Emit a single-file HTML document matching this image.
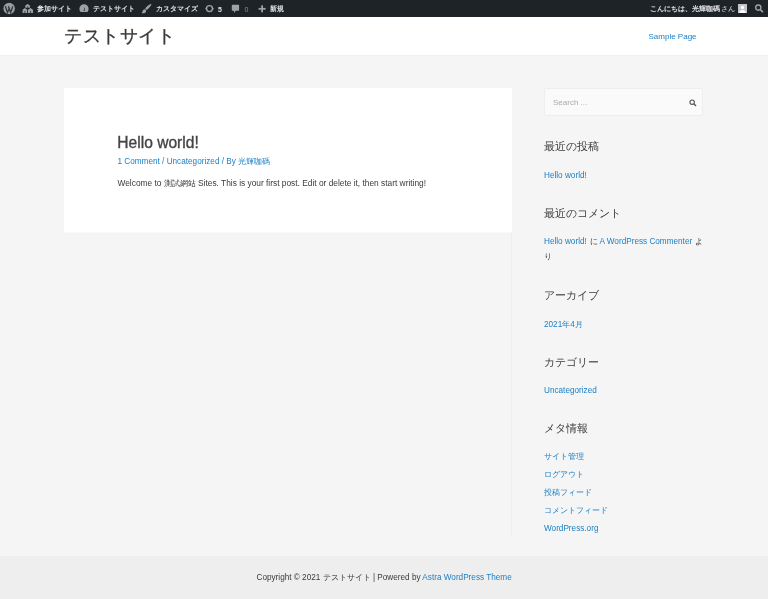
<!DOCTYPE html>
<html lang="ja"><head><meta charset="utf-8">
<style>
*{box-sizing:border-box;margin:0;padding:0}
html,body{width:768px;height:599px;overflow:hidden}
body{will-change:transform;background:#f5f5f5;font-family:"Liberation Sans",sans-serif;color:#3a3a3a;position:relative}
.abs{position:absolute;white-space:nowrap;line-height:1}
#adminbar{position:absolute;left:0;top:0;width:768px;height:17px;background:#1d2327;color:#e2e3e4;font-size:6.8px;font-weight:bold}
#adminbar svg{position:absolute}
#header{position:absolute;left:0;top:17px;width:768px;height:38px;background:#fff}
#card{position:absolute;left:64px;top:88px;width:448px;height:144px;background:#fff;box-shadow:0 1px 0 #fafafa}
#vline{position:absolute;left:511px;top:232px;width:1px;height:304px;background:#efefef}
#footer{position:absolute;left:0;top:556px;width:768px;height:43px;background:#eeeeee}
.link{color:#1a7fc5}
.wt{font-size:11.4px;color:#3a3a3a}
.wl{font-size:8.2px;color:#1a7fc5}
.wj{font-size:8px;color:#1a7fc5}
#search{position:absolute;left:544px;top:88px;width:159px;height:28px;background:#fafafa;border:1px solid #eeeeee;border-radius:2px}
</style></head>
<body>
<div id="adminbar">
  <svg style="left:0;top:0" width="768" height="17" viewBox="0 0 768 17">
    <g fill="#9ea2a6">
      <circle cx="9.15" cy="8.5" r="5.75" fill="#999c9f"/>
      <path d="M25.3 7.7 L25.3 5.6 L27.6 3.9 L29.9 5.6 L29.9 7.7 Z"/>
      <path d="M22.6 13.1 L22.6 9.8 L24.9 8 L27.2 9.8 L27.2 13.1 Z"/>
      <path d="M28 13.1 L28 9.8 L30.5 8 L33 9.8 L33 13.1 Z"/>
      <path d="M80.6 12 A4.6 4.6 0 1 1 87.4 12 Z"/>
      <path d="M151.2 4.1 C151.9 4.7 149 8.6 146.8 10 L145.1 8.6 C146.6 6.6 150.5 3.5 151.2 4.1 Z"/>
      <path d="M145.5 9.4 C146.6 10.3 146.3 12.8 143.9 13.2 C143.1 13.3 142.1 13.3 141.6 13 C142.4 12.5 142.3 11.2 143 10.2 C143.7 9.3 144.8 8.9 145.5 9.4 Z"/>
      <path d="M231.8 5.2 Q231.8 4.8 232.2 4.8 L238.7 4.8 Q239.1 4.8 239.1 5.2 L239.1 10.3 Q239.1 10.7 238.7 10.7 L235.6 10.7 L234.4 13.1 L233.8 10.7 L232.2 10.7 Q231.8 10.7 231.8 10.3 Z"/>
      <rect x="261.2" y="5.3" width="1.8" height="7"/>
      <rect x="258.6" y="7.9" width="7" height="1.8"/>
      <rect x="738" y="4" width="9" height="9" fill="#c3c4c7"/>
    </g>
    <path d="M5.3 6.2 L7.5 12.5 L9.3 8.2 M8.4 6.2 L10.6 12.3 L12.8 6.4" fill="none" stroke="#30353a" stroke-width="1.3"/>
    <g fill="#1d2327">
      <rect x="27.1" y="6.5" width="1" height="1.2"/>
      <rect x="24.3" y="11.3" width="1.2" height="1.3"/>
      <rect x="29.9" y="11.3" width="1.2" height="1.3"/>
      <path d="M83.7 10.9 L84.2 7.6 L84.6 7.6 L84.6 10.9 Z"/>
    </g>
    <g fill="none" stroke="#9ea2a6" stroke-width="1.35">
      <circle cx="209.5" cy="8.6" r="3.0"/>
      <circle cx="758.3" cy="7.6" r="2.6"/>
      <path d="M760.3 9.6 L763 12.2" stroke-width="1.6"/>
    </g>
    <g fill="#9ea2a6">
      <path d="M205.1 8.6 L206.9 6.6 L207.2 10.4 Z"/>
      <path d="M213.9 8.6 L212.1 10.6 L211.8 6.8 Z"/>
      </g>
    <g fill="#fff">
      <circle cx="742.5" cy="7.4" r="1.7"/>
      <path d="M739.3 13 C739.3 10.8 740.5 9.9 742.5 9.9 C744.5 9.9 745.7 10.8 745.7 13 Z"/>
    </g>
  </svg>
  <div class="abs" style="left:36.5px;top:5.6px">参加サイト</div>
  <div class="abs" style="left:92.5px;top:5.6px">テストサイト</div>
  <div class="abs" style="left:155.5px;top:5.6px">カスタマイズ</div>
  <div class="abs" style="left:218px;top:5.6px;font-size:7px">5</div>
  <div class="abs" style="left:244.5px;top:5.6px;font-size:7px;color:#8c8f94;font-weight:normal">0</div>
  <div class="abs" style="left:270px;top:5.6px">新規</div>
  <div class="abs" style="left:649.5px;top:5.6px">こんにちは、光輝咖碼 <span style="font-weight:normal">さん</span></div>
</div>
<div id="header">
  <div class="abs" style="left:64px;top:9.6px;font-size:18.45px;letter-spacing:0.6px;color:#3a3a3a;-webkit-text-stroke:0.3px #3a3a3a">テストサイト</div>
  <div class="abs link" style="left:648.5px;top:15.8px;font-size:8px">Sample Page</div>
</div>
<div id="card">
  <div class="abs" style="left:53.3px;top:47px;font-size:15.6px;color:#444;-webkit-text-stroke:0.35px #444">Hello world!</div>
  <div class="abs link" style="left:53.5px;top:70px;font-size:8.2px">1 Comment / Uncategorized / By 光輝咖碼</div>
  <div class="abs" style="left:53.5px;top:91.2px;font-size:8.35px">Welcome to 測試網站 Sites. This is your first post. Edit or delete it, then start writing!</div>
</div>
<div id="vline"></div>
<div style="position:absolute;left:0;top:55px;width:768px;height:1px;background:#f0f0f0"></div>
<div id="search">
  <div class="abs" style="left:8px;top:9.9px;font-size:8px;color:#aaaaaa">Search ...</div>
  <svg style="position:absolute;left:143.75px;top:9.75px" width="8" height="8" viewBox="0 0 16 16">
    <circle cx="6.3" cy="6.3" r="4.4" fill="none" stroke="#555" stroke-width="2.2"/>
    <path d="M9.6 9.6 L14 14" stroke="#555" stroke-width="2.8"/>
  </svg>
</div>
<div class="abs wt" style="left:544px;top:141px">最近の投稿</div>
<div class="abs wl" style="left:544px;top:172px">Hello world!</div>
<div class="abs wt" style="left:544px;top:208px">最近のコメント</div>
<div class="abs wl" style="left:544px;top:238px">Hello world!</div>
<div class="abs wj" style="left:589.5px;top:238px;color:#3a3a3a">に</div>
<div class="abs wl" style="left:599.5px;top:238px">A WordPress Commenter</div>
<div class="abs wj" style="left:694.5px;top:238px;color:#3a3a3a">よ</div>
<div class="abs wj" style="left:544px;top:252.8px;color:#3a3a3a">り</div>
<div class="abs wt" style="left:544px;top:290px">アーカイブ</div>
<div class="abs wl" style="left:544px;top:321px">2021年4月</div>
<div class="abs wt" style="left:544px;top:356.5px">カテゴリー</div>
<div class="abs wl" style="left:544px;top:387px">Uncategorized</div>
<div class="abs wt" style="left:544px;top:423px">メタ情報</div>
<div class="abs wj" style="left:544px;top:453px">サイト管理</div>
<div class="abs wj" style="left:544px;top:471px">ログアウト</div>
<div class="abs wj" style="left:544px;top:489px">投稿フィード</div>
<div class="abs wj" style="left:544px;top:507px">コメントフィード</div>
<div class="abs wl" style="left:544px;top:525.3px">WordPress.org</div>
<div id="footer">
  <div class="abs" style="left:256.5px;top:18px;font-size:8.2px">Copyright © 2021 テストサイト | Powered by <span class="link">Astra WordPress Theme</span></div>
</div>
</body></html>
